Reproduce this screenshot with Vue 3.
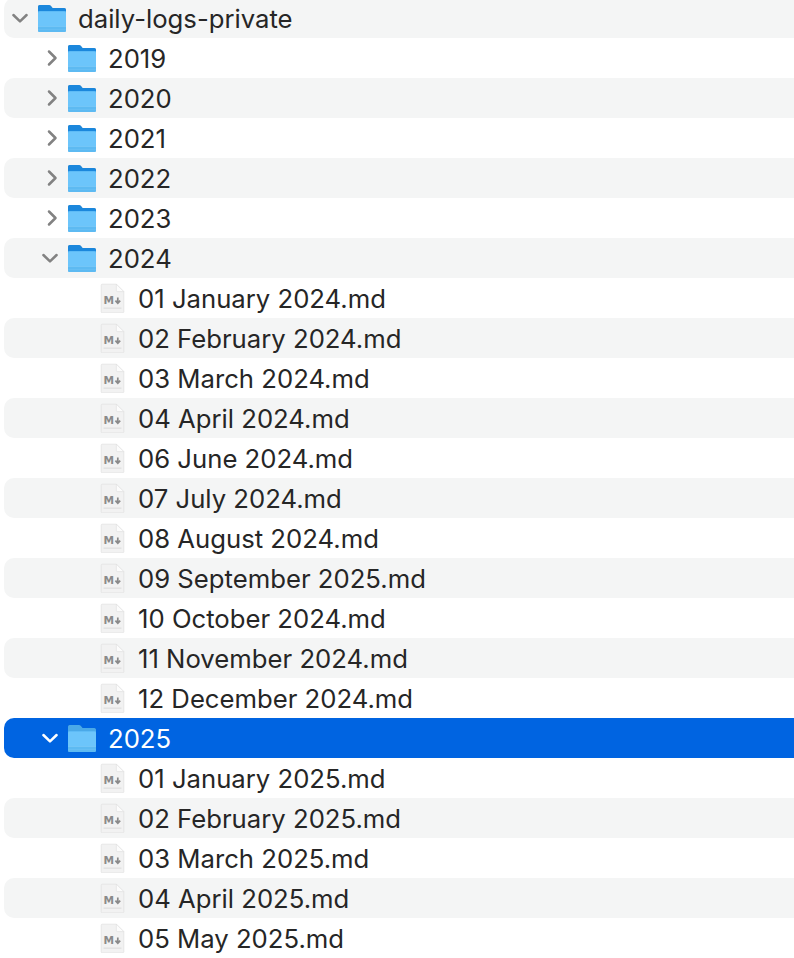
<script setup>
const files24 = ['01 January 2024.md','02 February 2024.md','03 March 2024.md','04 April 2024.md','06 June 2024.md','07 July 2024.md','08 August 2024.md','09 September 2025.md','10 October 2024.md','11 November 2024.md','12 December 2024.md']
const files25 = ['01 January 2025.md','02 February 2025.md','03 March 2025.md','04 April 2025.md','05 May 2025.md']
const rows = [
  { name: 'daily-logs-private', kind: 'folder', level: 0, open: true },
  ...['2019','2020','2021','2022','2023'].map(name => ({ name, kind: 'folder', level: 1, open: false })),
  { name: '2024', kind: 'folder', level: 1, open: true },
  ...files24.map(name => ({ name, kind: 'file', level: 2 })),
  { name: '2025', kind: 'folder', level: 1, open: true, selected: true },
  ...files25.map(name => ({ name, kind: 'file', level: 2 })),
]
</script>

<template>
  <div class="page">
    <ul class="tree">
      <li
        v-for="(row, i) in rows"
        :key="row.name"
        class="row"
        :class="[`level-${row.level}`, row.kind, { striped: i % 2 === 0, selected: row.selected }]"
      >
        <svg v-if="row.kind === 'folder'" class="chevron" viewBox="0 0 18 18" width="18" height="18" fill="none" stroke="currentColor" stroke-width="2.5" stroke-linecap="round" stroke-linejoin="round">
          <path v-if="row.open" d="M2.4 6 L9 12.4 L15.6 6" />
          <path v-else d="M8 2.5 L14.5 9 L8 15.5" />
        </svg>
        <svg v-if="row.kind === 'folder'" class="icon" viewBox="0 1 30 30" width="30" height="30">
          <path class="tab" d="M1 4.5 Q1 3 2.5 3 H12 Q13.2 3 14 3.9 L15.6 6 H27.4 Q29 6 29 7.6 V13 H1 Z" />
          <rect x="1" y="9" width="28" height="21" rx="1.6" fill="#6cc5fb" />
          <rect x="1" y="9" width="28" height="0.6" fill="#55b5f3" />
          <path d="M1 24 H29 V28.2 Q29 30 27.2 30 H2.8 Q1 30 1 28.2 Z" fill="#5dbaf2" />
          <rect x="1" y="24" width="28" height="0.6" fill="#84cffa" />
          <rect x="1" y="27" width="28" height="0.5" fill="#70c2f5" />
        </svg>
        <svg v-else class="icon" viewBox="0 0 30 30" width="30" height="30">
          <path d="M4.2 1.2 Q3.2 1.2 3.2 2.2 V28.8 Q3.2 29.8 4.2 29.8 H24.8 Q25.8 29.8 25.8 28.8 V8.6 L18.4 1.2 Z" fill="#f2f2f2" stroke="#e2e2e2" stroke-width="0.8" />
          <path d="M18.4 1.2 V7.6 Q18.4 8.6 19.4 8.6 H25.8 Z" fill="#fcfcfc" stroke="#dedede" stroke-width="0.6" />
          <rect x="5.5" y="24.4" width="18" height="1.6" fill="#e3e3e3" />
          <text x="5.6" y="21" class="md">M</text>
          <path d="M19.8 14.4 V20 M17.4 17.6 L19.8 20.2 L22.2 17.6" fill="none" stroke="#8a8a8a" stroke-width="1.7" />
        </svg>
        <span class="label">{{ row.name }}</span>
      </li>
    </ul>
  </div>
</template>

<style scoped>
.page {
  width: 794px;
  height: 958px;
  overflow: hidden;
  background: #fff;
}
.tree {
  list-style: none;
  margin: -2px 0 0;
  padding: 0;
}
.row {
  display: flex;
  align-items: center;
  height: 40px;
  margin-left: 4px;
  border-radius: 10px 0 0 10px;
  font-family: Inter, "Liberation Sans", sans-serif;
  font-size: 25.7px;
  color: #262626;
  white-space: nowrap;
}
.striped {
  background: #f4f5f5;
}
.selected {
  background: #0064e1;
  color: #fff;
}
.chevron {
  flex: none;
  color: #828282;
}
.selected .chevron {
  color: #fff;
}
.level-0 {
  padding-left: 7px;
}
.level-1 {
  padding-left: 37px;
}
.level-2 {
  padding-left: 94px;
}
.icon {
  flex: none;
  margin-left: 8px;
  filter: drop-shadow(0 0.5px 0.5px rgba(0, 0, 0, 0.2));
}
.tab {
  fill: #1b87dc;
}
.selected .tab {
  fill: #4aa9e8;
}
.file .icon {
  margin-left: 0;
  filter: none;
}
.label {
  margin-left: 11px;
}
.file .label {
  margin-left: 10px;
}
.md {
  font-family: "DejaVu Sans", sans-serif;
  font-size: 10.6px;
  font-weight: 700;
  fill: #8a8a8a;
}
</style>
